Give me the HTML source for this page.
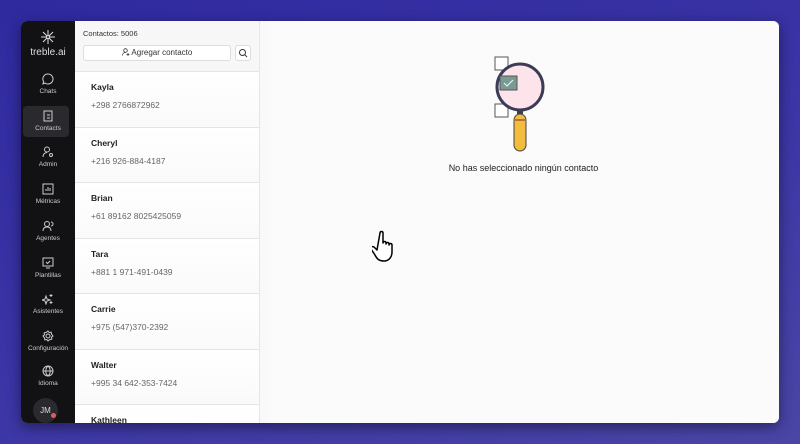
<!DOCTYPE html><html><head><meta charset="utf-8"><style>
*{margin:0;padding:0;box-sizing:border-box}
body{width:800px;height:444px;overflow:hidden;background:linear-gradient(160deg,#2f2a9e 0%,#3a34a6 50%,#4a46a6 100%);font-family:"Liberation Sans",sans-serif;position:relative}
.win{position:absolute;left:21px;top:21px;width:758px;height:402px;border-radius:6px;overflow:hidden;background:#f9f9fa;box-shadow:0 4px 14px rgba(0,0,0,.45)}
.side{position:absolute;left:0;top:0;width:54px;height:402px;background:#121214;color:#ddd;text-align:center}
.logo{position:absolute;top:8px;width:54px;font-size:10px;color:#ddd}
.nav{position:absolute;left:0;width:54px;font-size:6.5px;color:#ccc}
.nav svg{display:block;margin:0 auto 3px}
.act{position:absolute;left:2px;top:85px;width:46px;height:31px;background:#2a2a2e;border-radius:4px}
.list{position:absolute;left:54px;top:0;width:185px;height:402px;background:#fff;border-right:1px solid #e6e6e6}
.hdr{height:51px;background:#f7f7f8;border-bottom:1px solid #e5e5e5}
.cnt{position:absolute;left:8px;top:8px;font-size:7.5px;color:#333}
.btn{position:absolute;left:8px;top:24px;width:148px;height:16px;border:1px solid #ddd;border-radius:3px;background:#fff;font-size:8px;color:#333;text-align:center;line-height:14px}
.sb{position:absolute;left:160px;top:24px;width:16px;height:16px;border:1px solid #ddd;border-radius:3px;background:#fff}
.row{height:55.5px;border-bottom:1.5px solid #e4e4e4;padding:10px 0 0 16px;background:linear-gradient(#fff,#fafafa)}
.n{font-size:8.5px;font-weight:bold;color:#222}
.p{font-size:8.5px;color:#666;margin-top:8px}
.main{position:absolute;left:247px;top:0;right:0;height:402px;background:#fbfbfb}
</style></head><body>
<div class="win">
<div class="side">
<div class="logo"><svg width="16" height="16" viewBox="0 0 16 16" style="display:block;margin:0 auto 2px"><path d="M8 1v14M1 8h14M3 3l10 10M13 3L3 13" stroke="#ddd" stroke-width="1"/><circle cx="8" cy="8" r="1.5" fill="#121214" stroke="#ddd"/></svg>treble.ai</div>
<div class="act"></div>
<div class="nav" style="top:52px"><svg width="12" height="12" viewBox="0 0 12 12"><path d="M6 1a5 5 0 1 1-3 9L1 11l.6-2.4A5 5 0 0 1 6 1z" fill="none" stroke="#ccc"/></svg>Chats</div>
<div class="nav" style="top:89px"><svg width="12" height="12" viewBox="0 0 12 12"><rect x="2" y="1" width="8" height="10" fill="none" stroke="#ccc"/><path d="M5 5h3M5 8h3" stroke="#ccc"/></svg>Contacts</div>
<div class="nav" style="top:125px"><svg width="12" height="12" viewBox="0 0 12 12"><circle cx="5" cy="3.5" r="2.5" fill="none" stroke="#ccc"/><path d="M1 11c0-3 2-4.5 4-4.5" fill="none" stroke="#ccc"/><circle cx="9" cy="9" r="1.5" fill="none" stroke="#ccc"/></svg>Admin</div>
<div class="nav" style="top:162px"><svg width="12" height="12" viewBox="0 0 12 12"><rect x="1" y="1" width="10" height="10" fill="none" stroke="#ccc"/><path d="M4 8V6M6 8V4M8 8V5" stroke="#ccc"/></svg>Métricas</div>
<div class="nav" style="top:199px"><svg width="12" height="12" viewBox="0 0 12 12"><circle cx="5" cy="4" r="2.5" fill="none" stroke="#ccc"/><path d="M1 11c0-3 2-4 4-4s4 1 4 4M9 2a2 2 0 0 1 0 4" fill="none" stroke="#ccc"/></svg>Agentes</div>
<div class="nav" style="top:236px"><svg width="12" height="12" viewBox="0 0 12 12"><rect x="1" y="1" width="10" height="8" fill="none" stroke="#ccc"/><path d="M4 5l1.5 1.5L8 4M4 11h4" fill="none" stroke="#ccc"/></svg>Plantillas</div>
<div class="nav" style="top:272px"><svg width="12" height="12" viewBox="0 0 12 12"><path d="M4 3l1 3 3 1-3 1-1 3-1-3-3-1 3-1zM9 1v3M7.5 2.5h3M9 8v3M7.5 9.5h3" fill="none" stroke="#ccc"/></svg>Asistentes</div>
<div class="nav" style="top:309px"><svg width="12" height="12" viewBox="0 0 12 12"><circle cx="6" cy="6" r="2" fill="none" stroke="#ccc"/><path d="M6 1l1.2 1.5 2-.3.3 2L11 6l-1.5 1.2.3 2-2 .3L6 11 4.8 9.5l-2 .3-.3-2L1 6l1.5-1.2-.3-2 2-.3z" fill="none" stroke="#ccc"/></svg>Configuración</div>
<div class="nav" style="top:344px"><svg width="12" height="12" viewBox="0 0 12 12"><circle cx="6" cy="6" r="5" fill="none" stroke="#ccc"/><path d="M1 6h10M6 1c-3 3-3 7 0 10M6 1c3 3 3 7 0 10" fill="none" stroke="#ccc"/></svg>Idioma</div>
<div style="position:absolute;left:12px;top:377px;width:25px;height:25px;border-radius:50%;background:#2a2a2e;color:#ddd;font-size:8px;line-height:25px">JM</div>
<div style="position:absolute;left:30px;top:392px;width:5px;height:5px;border-radius:50%;background:#e85a5a"></div>
</div>
<div class="list">
<div class="hdr"><div class="cnt">Contactos: 5006</div><div class="btn"><svg width="8" height="8" viewBox="0 0 8 8" style="vertical-align:-1px"><circle cx="3.5" cy="2.5" r="1.8" fill="none" stroke="#333" stroke-width=".8"/><path d="M.5 7.5c0-2 1.5-3 3-3M6 5v3M4.5 6.5h3" fill="none" stroke="#333" stroke-width=".8"/></svg> Agregar contacto</div><div class="sb"><svg width="14" height="14" viewBox="0 0 14 14"><circle cx="6.5" cy="6.5" r="3" fill="none" stroke="#333"/><path d="M9 9l2 2" stroke="#333"/></svg></div></div>
<div class="row"><div class="n">Kayla</div><div class="p">+298 2766872962</div></div>
<div class="row"><div class="n">Cheryl</div><div class="p">+216 926-884-4187</div></div>
<div class="row"><div class="n">Brian</div><div class="p">+61 89162 8025425059</div></div>
<div class="row"><div class="n">Tara</div><div class="p">+881 1 971-491-0439</div></div>
<div class="row"><div class="n">Carrie</div><div class="p">+975 (547)370-2392</div></div>
<div class="row"><div class="n">Walter</div><div class="p">+995 34 642-353-7424</div></div>
<div class="row"><div class="n">Kathleen</div></div>
</div>
<div class="main">
<svg style="position:absolute;left:223px;top:33px" width="60" height="110" viewBox="0 0 60 110">
<rect x="4" y="3" width="13" height="13" fill="#fff" stroke="#555"/>
<rect x="4" y="50" width="13" height="13" fill="#fff" stroke="#555"/>
<circle cx="29" cy="33" r="23" fill="#fde4ea" stroke="#3a3d55" stroke-width="3"/>
<rect x="9" y="22" width="17" height="14" fill="#7a9a93" stroke="#555"/>
<path d="M13 29l3 3 6-6" stroke="#dff" fill="none"/>
<rect x="26" y="55" width="6" height="5" fill="#3a3d55"/>
<rect x="23" y="60" width="12" height="37" rx="6" fill="#f2bd3c" stroke="#444"/>
<path d="M23 66h12" stroke="#b5733a" stroke-width="2"/>
</svg>
<div style="position:absolute;left:0;right:0;top:142px;text-align:center;font-size:9px;color:#222">No has seleccionado ningún contacto</div>
</div>
</div>
<svg style="position:absolute;left:372px;top:230px" width="30" height="34" viewBox="0 0 30 34"><path d="M8 3c0-2 3-2 3 0v10c0-2 3-2 3 0v1c0-2 3-2 3 0v1c0-2 3-2 3 0v7c0 5-3 9-8 9s-7-2-9-6l-4-6c-1-2 1-3 3-2l3 3z" fill="#fff" stroke="#000" stroke-width="1.5" stroke-linejoin="round"/></svg>
</body></html>
